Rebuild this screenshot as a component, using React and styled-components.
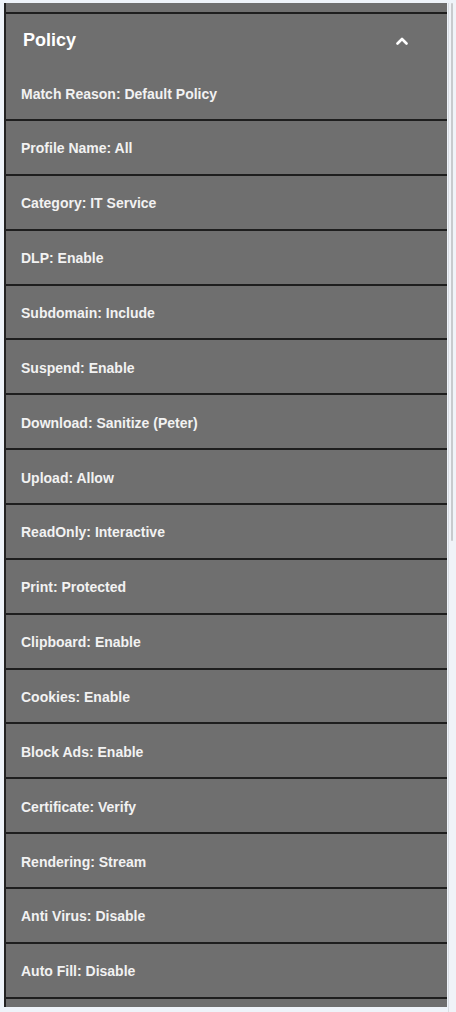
import React from 'react';
import styled, { createGlobalStyle } from 'styled-components';

const GlobalStyle = createGlobalStyle`
  html, body {
    margin: 0;
    padding: 0;
    background: #eef3f9;
    overflow: hidden;
  }
  body {
    font-family: "Liberation Sans", Arial, sans-serif;
  }
`;

const items = [
  'Profile Name: All',
  'Category: IT Service',
  'DLP: Enable',
  'Subdomain: Include',
  'Suspend: Enable',
  'Download: Sanitize (Peter)',
  'Upload: Allow',
  'ReadOnly: Interactive',
  'Print: Protected',
  'Clipboard: Enable',
  'Cookies: Enable',
  'Block Ads: Enable',
  'Certificate: Verify',
  'Rendering: Stream',
  'Anti Virus: Disable',
  'Auto Fill: Disable',
];

const App = () => (
  <Page>
    <GlobalStyle />
    <Panel>
      <Stub />
      <Header>
        <Title>Policy</Title>
        <Caret viewBox="0 0 12 8" aria-hidden="true">
          <path d="M1.5 6.5 L6 2 L10.5 6.5" />
        </Caret>
      </Header>
      <Row first>Match Reason: Default Policy</Row>
      {items.map((text) => (
        <Row key={text}>{text}</Row>
      ))}
      <Stub />
    </Panel>
    <ScrollTrack>
      <Thumb />
    </ScrollTrack>
  </Page>
);

const Page = styled.div`
  display: flex;
  width: 456px;
  height: 1012px;
  padding-top: 3px;
  box-sizing: border-box;
`;

const Panel = styled.div`
  width: 443px;
  margin-left: 4px;
  align-self: flex-start;
  background: #6f6f6f;
  border-left: 2px solid #222;
  box-sizing: border-box;
`;

const Stub = styled.div`
  height: 9px;
  border-bottom: 2px solid #1e1e1e;
  &:last-child {
    border-bottom: 0;
    height: 8px;
  }
`;

const Header = styled.div`
  display: flex;
  align-items: center;
  justify-content: space-between;
  height: 52px;
  padding: 0 39px 0 17px;
`;

const Title = styled.h2`
  margin: 0;
  color: #fff;
  font-size: 18px;
  font-weight: bold;
`;

const Caret = styled.svg`
  width: 12px;
  height: 8px;
  margin-top: 2px;
  fill: none;
  stroke: #fff;
  stroke-width: 2.6;
  stroke-linecap: round;
  stroke-linejoin: round;
`;

const Row = styled.div`
  display: flex;
  align-items: center;
  box-sizing: border-box;
  height: ${(p) => (p.first ? '55px' : '54.87px')};
  padding: 2px 0 0 15px;
  color: #f2f2f2;
  font-size: 14px;
  font-weight: bold;
  border-bottom: 2px solid #1e1e1e;
`;

const ScrollTrack = styled.div`
  flex: 1;
  margin-left: 1px;
  border-left: 1px solid #d9dde3;
  background: #f0f3f8;
  padding: 0 3px 0 2px;
`;

const Thumb = styled.div`
  height: 538px;
  background: #c8cacd;
  border-radius: 1px;
`;

export default App;
